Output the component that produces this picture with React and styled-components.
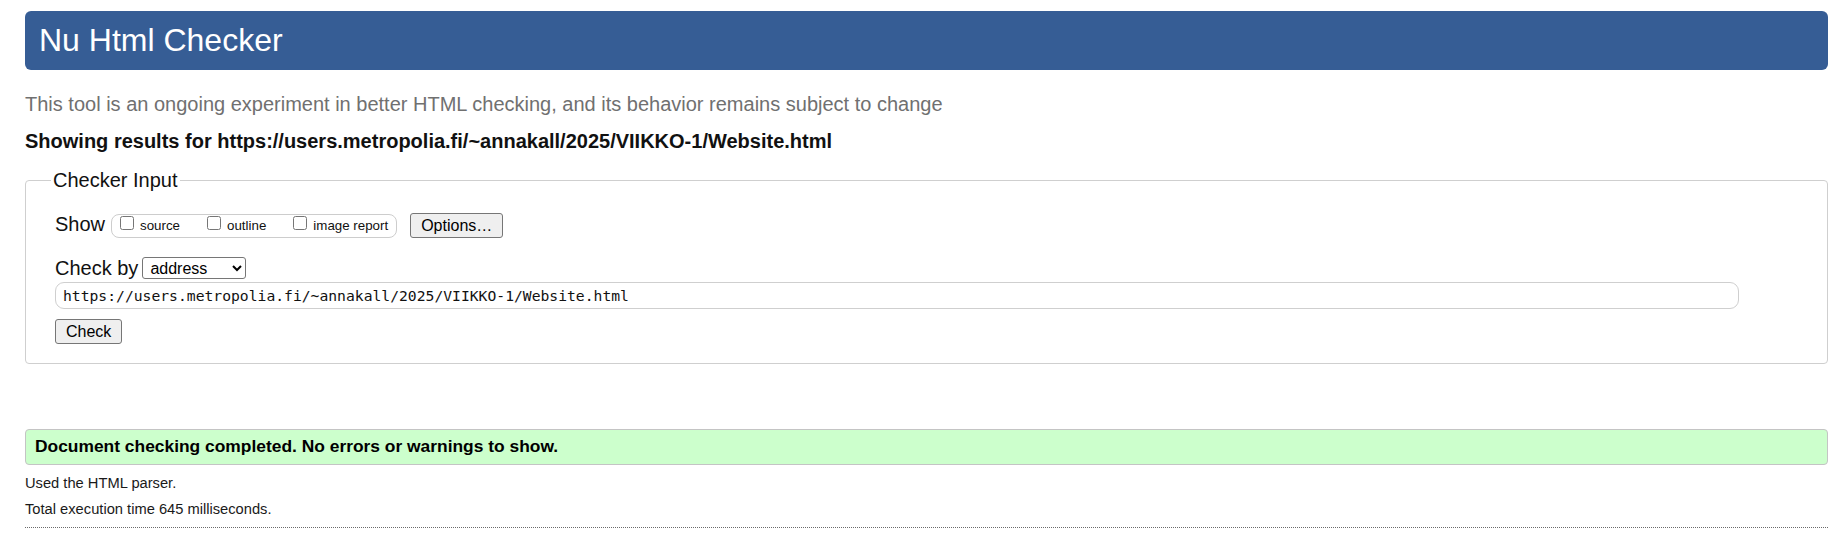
import React from "react";
import styled, { createGlobalStyle } from "styled-components";

const GlobalStyle = createGlobalStyle`
  html, body {
    margin: 0;
    background: #fff;
  }
  body {
    padding: 11px 13px 0 25px;
    font-family: "Liberation Sans", Arial, sans-serif;
    color: #000;
  }
`;

const Header = styled.h1`
  margin: 0;
  height: 59px;
  padding: 0 14px;
  line-height: 59px;
  font-size: 32px;
  font-weight: normal;
  color: #fff;
  background: #365d95;
  border-radius: 6px;
`;

const Intro = styled.p`
  margin: 22px 0 0;
  font-size: 20px;
  line-height: 24px;
  color: #707070;
`;

const Results = styled.h2`
  margin: 13px 0 0;
  font-size: 20px;
  line-height: 24px;
  font-weight: bold;
  color: #111;
`;

const Fieldset = styled.fieldset`
  margin: 16px 0 0;
  padding: 22px 88px 19px 29px;
  border: 1px solid #cfcfcf;
  border-radius: 4px;
  min-width: 0;
`;

const Legend = styled.legend`
  margin-left: -4px;
  padding: 0 2px;
  font-size: 20px;
  line-height: 22px;
  color: #111;
`;

const Row = styled.div`
  display: flex;
  align-items: center;
  height: ${(p) => p.$height}px;
  margin-top: ${(p) => p.$gap || 0}px;
`;

const RowLabel = styled.label`
  font-size: 20px;
  line-height: 20px;
  margin-right: ${(p) => p.$space}px;
  margin-bottom: ${(p) => p.$lift || 0}px;
  color: #111;
`;

const Group = styled.span`
  display: inline-flex;
  align-items: center;
  gap: 27px;
  height: 24px;
  box-sizing: border-box;
  padding: 0 8px;
  border: 1px solid #cdcdcd;
  border-radius: 8px;
  margin-right: 13px;
`;

const Option = styled.label`
  display: inline-flex;
  align-items: center;
  gap: 6px;
  font-size: 13.33px;
  line-height: 15px;
  color: #111;
`;

const Box = styled.input`
  width: 14px;
  height: 14px;
  margin: 0 0 6px;
`;

const Button = styled.button`
  height: 25px;
  padding: 0 10px;
  font-family: "Liberation Sans", Arial, sans-serif;
  font-size: 16px;
  color: #000;
  background: #efefef;
  border: 1px solid #767676;
  border-radius: 3px;
`;

const Select = styled.select`
  width: 104px;
  height: 22px;
  padding: 0 0 0 3px;
  font-family: "Liberation Sans", Arial, sans-serif;
  font-size: 16px;
  color: #000;
  background: #fff;
  border: 1px solid #767676;
  border-radius: 3px;
`;

const UrlInput = styled.input`
  display: block;
  width: 100%;
  height: 27px;
  box-sizing: border-box;
  margin-top: 3px;
  padding: 0 7px;
  font-family: "DejaVu Sans Mono", "Liberation Mono", monospace;
  font-size: 14.7px;
  color: #111;
  border: 1px solid #cfcfcf;
  border-radius: 9px;
  outline: none;
`;

const Submit = styled(Button)`
  display: block;
  margin-top: 10px;
`;

const Success = styled.p`
  margin: 65px 0 0;
  padding: 0 0 2px 9px;
  line-height: 32px;
  font-size: 17.4px;
  font-weight: bold;
  color: #000;
  background: #ccffcc;
  border: 1px solid #c4c4c4;
  border-radius: 4px;
`;

const Detail = styled.p`
  margin: ${(p) => p.$top}px 0 0;
  font-size: 14.7px;
  line-height: 20px;
  color: #1a1a1a;
`;

const Rule = styled.hr`
  margin: 8px 0 0;
  border: 0;
  border-top: 1px dotted #6a6a6a;
`;

export default function App() {
  const url = "https://users.metropolia.fi/~annakall/2025/VIIKKO-1/Website.html";

  return (
    <>
      <GlobalStyle />
      <Header>Nu Html Checker</Header>
      <Intro>
        This tool is an ongoing experiment in better HTML checking, and its
        behavior remains subject to change
      </Intro>
      <Results>Showing results for {url}</Results>

      <Fieldset>
        <Legend>Checker Input</Legend>
        <Row $height={25}>
          <RowLabel $space={6} $lift={4}>Show</RowLabel>
          <Group>
            <Option>
              <Box type="checkbox" />
              source
            </Option>
            <Option>
              <Box type="checkbox" />
              outline
            </Option>
            <Option>
              <Box type="checkbox" />
              image report
            </Option>
          </Group>
          <Button type="button">Options…</Button>
        </Row>
        <Row $height={22} $gap={19}>
          <RowLabel $space={4}>Check by</RowLabel>
          <Select defaultValue="address">
            <option value="address">address</option>
            <option value="file">file upload</option>
            <option value="text">text input</option>
          </Select>
        </Row>
        <UrlInput type="url" defaultValue={url} />
        <Submit type="submit">Check</Submit>
      </Fieldset>

      <Success>Document checking completed. No errors or warnings to show.</Success>
      <Detail $top={8}>Used the HTML parser.</Detail>
      <Detail $top={6}>Total execution time 645 milliseconds.</Detail>
      <Rule />
    </>
  );
}
